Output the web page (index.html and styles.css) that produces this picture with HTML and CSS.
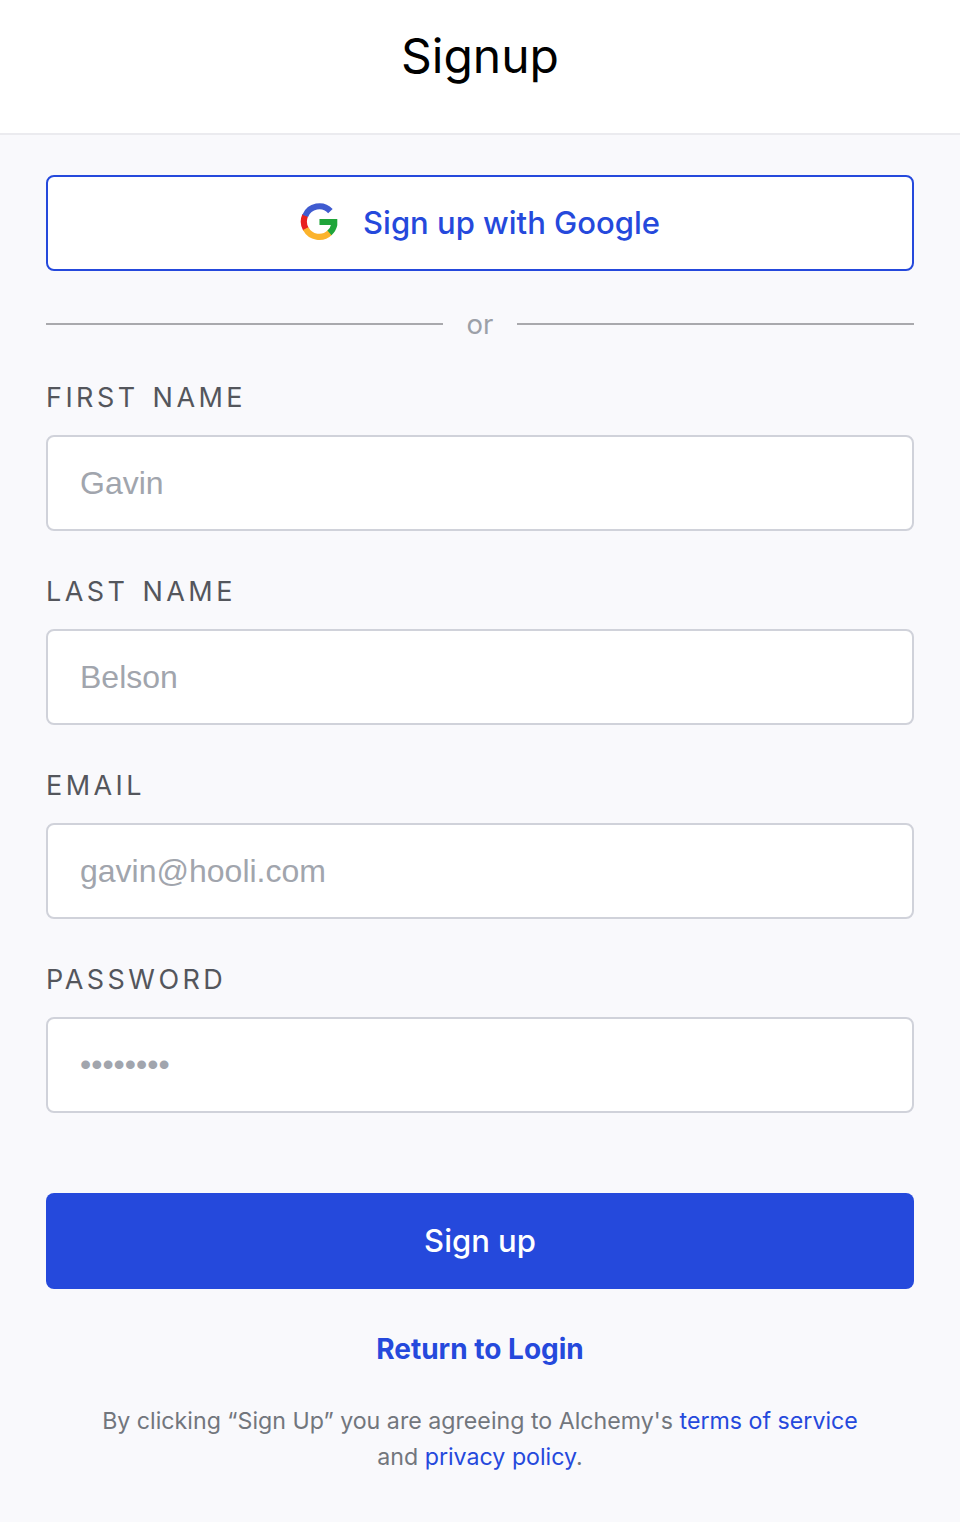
FILE: index.html
```html
<!DOCTYPE html>
<html lang="en">
<head>
  <meta charset="UTF-8">
  <meta name="viewport" content="width=device-width, initial-scale=1.0">
  <title>Signup</title>
  <link rel="stylesheet" href="styles.css">
</head>
<body>
  <header class="top-bar">
    <h1>Signup</h1>
  </header>
  <main class="content">
    <button class="google-btn" type="button">
      <svg class="google-icon" viewBox="0 0 40 40" width="38" height="38" fill="none" stroke-width="6.5">
        <path d="M6.2 27.5A16 16 0 0 1 5.5 13" stroke="#e8201f"/>
        <path d="M5.5 13.5A16 16 0 0 1 32 8.5" stroke="#3f5bd0"/>
        <path d="M6 27A16 16 0 0 0 31.5 31" stroke="#fbb32c"/>
        <path d="M20.5 20H36V23A16 16 0 0 1 31 31.5" stroke="#1fa53a"/>
      </svg>
      <span>Sign up with Google</span>
    </button>

    <div class="divider"><span>or</span></div>

    <form class="signup-form">
      <div class="field">
        <label for="first">First name</label>
        <input id="first" type="text" placeholder="Gavin">
      </div>
      <div class="field">
        <label for="last">Last name</label>
        <input id="last" type="text" placeholder="Belson">
      </div>
      <div class="field">
        <label for="email">Email</label>
        <input id="email" type="text" placeholder="gavin@hooli.com">
      </div>
      <div class="field">
        <label for="password">Password</label>
        <input class="password-input" id="password" type="text" placeholder="••••••••">
      </div>
      <button class="submit-btn" type="button">Sign up</button>
    </form>

    <a class="login-link" href="#">Return to Login</a>
    <p class="terms">By clicking “Sign Up” you are agreeing to Alchemy's <a href="#">terms of service</a><br>and <a href="#">privacy policy</a>.</p>
  </main>
</body>
</html>
```

FILE: styles.css
```css
* {
  box-sizing: border-box;
}
html, body {
  height: 100%;
}
body {
  margin: 0;
  background: #f9f9fc;
  font-family: Inter, "Noto Sans", sans-serif;
}
.top-bar {
  height: 135px;
  background: #fff;
  border-bottom: 2px solid #ebebef;
  display: flex;
  justify-content: center;
  align-items: center;
}
.top-bar h1 {
  margin: 0 0 22px;
  font-size: 48px;
  font-weight: 400;
  color: #000;
  line-height: 1;
}
.content {
  padding: 40px 46px 0;
}
.google-btn {
  width: 100%;
  height: 96px;
  padding: 0 0 2px;
  background: #fff;
  border: 2px solid #2549dc;
  border-radius: 8px;
  color: #2549dc;
  font: 500 31px Inter, sans-serif;
  display: flex;
  justify-content: center;
  align-items: center;
  gap: 25px;
}
.google-icon {
  display: block;
}
.divider {
  display: flex;
  align-items: center;
  gap: 24px;
  margin-top: 36px;
  height: 34px;
  color: #9ca0a8;
  font-size: 27.5px;
}
.divider::before, .divider::after {
  content: "";
  flex: 1;
  height: 2px;
  background: #a9a9ad;
}
.signup-form {
  margin-top: 39px;
}
.field {
  margin-bottom: 43px;
}
.field label {
  display: block;
  height: 36px;
  margin-bottom: 19px;
  font-size: 27px;
  line-height: 36px;
  font-weight: 400;
  letter-spacing: 3.45px;
  word-spacing: 3px;
  text-transform: uppercase;
  color: #54565c;
}
.field input {
  display: block;
  width: 100%;
  height: 96px;
  padding: 0 32px;
  background: #fff;
  border: 2px solid #d0d2da;
  border-radius: 8px;
  font: 32px "Liberation Sans", Arial, sans-serif;
}
.field .password-input {
  padding-bottom: 2px;
}
.field input::placeholder {
  color: #a1a5ad;
  opacity: 1;
}
.submit-btn {
  display: block;
  width: 100%;
  height: 96px;
  margin-top: 80px;
  padding: 0 0 2px;
  background: #2549dc;
  border: 0;
  border-radius: 8px;
  color: #fff;
  font: 500 31px Inter, sans-serif;
}
.login-link {
  display: block;
  margin-top: 42px;
  line-height: 36px;
  text-align: center;
  font-size: 28px;
  font-weight: 700;
  color: #2549dc;
  text-decoration: none;
}
.terms {
  margin: 36px 0 0;
  text-align: center;
  font-size: 23.2px;
  line-height: 36px;
  color: #72767d;
}
.terms a {
  color: #2549dc;
  text-decoration: none;
}
```
